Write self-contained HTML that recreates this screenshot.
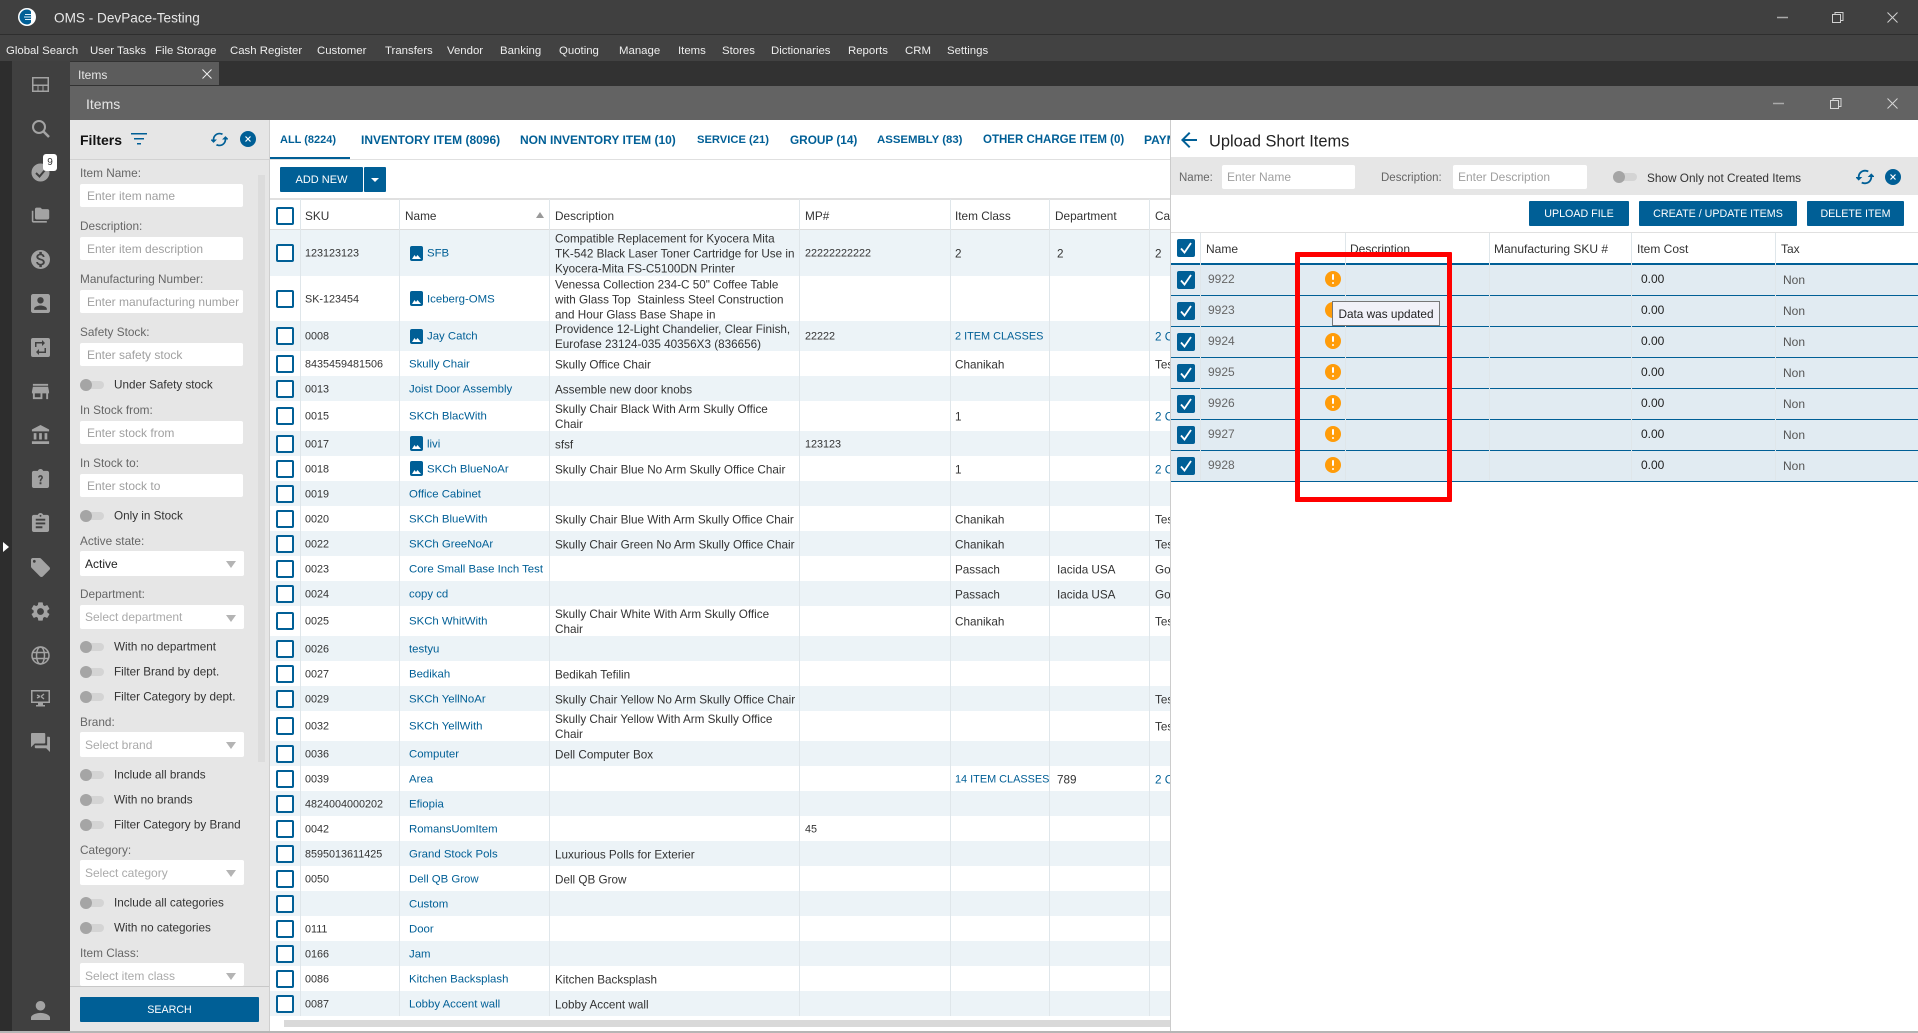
<!DOCTYPE html>
<html><head><meta charset="utf-8"><title>OMS</title>
<style>
html,body{margin:0;padding:0;width:1918px;height:1033px;overflow:hidden;background:#3f3f3f;font-family:"Liberation Sans",sans-serif;font-size:12px;color:#333}
.a{position:absolute}
.t{position:absolute;white-space:nowrap;transform:translateY(-50%)}
.menu span{position:absolute;top:51px;transform:translateY(-50%);color:#eee;font-size:11.4px;white-space:nowrap}
svg{display:block}
.ic{position:absolute;left:31px;width:19px;height:19px;fill:#a3a3a3}
.lbl{position:absolute;left:80px;color:#666;font-size:11.8px;transform:translateY(-50%);white-space:nowrap;margin-top:1px}
.inp{position:absolute;left:80px;width:163px;background:#fff;border-radius:2px;height:23px;line-height:25px;color:#a0a0a0;font-size:12px;text-indent:7px;white-space:nowrap;overflow:hidden}
.sel{position:absolute;left:80px;width:164px;background:#fff;border-radius:2px;height:25px;line-height:27px;color:#aaa;font-size:12px;text-indent:5px;white-space:nowrap}
.sel:after{content:"";position:absolute;right:8px;top:10px;border-left:5px solid transparent;border-right:5px solid transparent;border-top:7px solid #b4b4b4}
.tg{position:absolute;left:80px;width:24px;height:8px;border-radius:4px;background:#d4d4d4;transform:translateY(-50%)}
.tg:before{content:"";position:absolute;left:0;top:-2px;width:12px;height:12px;border-radius:50%;background:#a5a5a5}
.tl{position:absolute;left:114px;color:#333;font-size:11.7px;transform:translateY(-50%);white-space:nowrap}
.tab{position:absolute;top:140px;transform:translateY(-50%);color:#005f96;font-weight:bold;font-size:12px;white-space:nowrap}
.btn{position:absolute;background:#005f96;color:#fff;border-radius:1px;font-size:10.7px;text-align:center;white-space:nowrap}
#tb{position:absolute;left:270px;top:199px;width:900px;height:817px;overflow:hidden;font-size:11.7px}
.r{position:absolute;left:0;width:900px;display:block}
.s{background:#ecf3f7}
.r>div{position:absolute;top:calc(50% + 1px);transform:translateY(-50%);white-space:nowrap;line-height:15px}
.r .k{left:6px;top:50%;width:14px;height:14px;border:2px solid #005f96;border-radius:2px;background:#fff}
.r .sku{left:35px;font-size:10.8px}
.r .n{left:139px;color:#005f96;font-size:11.4px}
.r .n.i{left:157px}
.r .d{left:285px}
.r .m{left:535px;font-size:10.8px}
.r .c{left:685px}
.r .c.l{font-size:10.9px}
.r .e{left:787px}
.r .g{left:885px}
.l{color:#005f96}
.img{position:absolute;left:140px;width:13px;height:15px;background:#005f96;border-radius:2px}
.img svg{position:absolute;left:2px;top:8px}
.v{position:absolute;top:0;width:1px;height:817px;background:#dfe6ea}
.h{position:absolute;top:216px;transform:translateY(-50%);color:#333;white-space:nowrap;font-size:11.8px}
.ur{position:absolute;left:1171px;width:747px;height:30px;background:#e1ebf2;border-bottom:2px solid #005f96}
.ur .k{position:absolute;left:6px;top:6px;width:18px;height:18px;background:#005f96;border-radius:2px}
.ur .k svg{position:absolute;left:3px;top:2px}
.ur .a1{position:absolute;left:37px;top:calc(50% - 1px);transform:translateY(-50%);color:#666}
.ur .a2{position:absolute;left:470px;top:calc(50% - 1px);transform:translateY(-50%);color:#222}
.ur .a3{position:absolute;left:612px;top:50%;transform:translateY(-50%);color:#555}
.w{position:absolute;left:153.5px;top:7px;width:16px;height:16px;border-radius:50%;background:#ff9c0a}
.w:before{content:"";position:absolute;left:7px;top:3px;width:2px;height:6px;background:#fff;border-radius:1px}
.w:after{content:"";position:absolute;left:7px;top:11px;width:2px;height:2px;background:#fff;border-radius:1px}
.uh{position:absolute;top:249px;transform:translateY(-50%);white-space:nowrap;color:#333}
.uv{position:absolute;top:233px;width:1px;height:247px;background:#dfe6ea}
.rot{transform:rotate(90deg)}
</style></head><body>

<div class="a" style="left:0;top:0;width:1918px;height:34px;background:#404040"></div>
<div class="a" style="left:0;top:34px;width:1918px;height:1px;background:#2e2e2e"></div>
<div class="a" style="left:0;top:35px;width:1918px;height:26px;background:#424242"></div>
<svg class="a" style="left:18px;top:8px" width="18" height="18" viewBox="0 0 18 18"><circle cx="9" cy="9" r="9" fill="#fff"/><path d="M9 1.500A7.500 7.500 0 0 0 9 16.500Q11.500 16.500 13 14.500L13 3.500Q11.500 1.500 9 1.500Z" fill="#005f96"/><path d="M7 6.500h6M6 9h8M7 11.500h6" stroke="#d7ecf8" stroke-width="1.100"/></svg>
<div class="t" style="left:54px;top:18px;font-size:13.6px;color:#e8e8e8">OMS - DevPace-Testing</div>
<div class="menu">
<span style="left:6px">Global Search</span><span style="left:90px">User Tasks</span><span style="left:155px">File Storage</span><span style="left:230px">Cash Register</span><span style="left:317px">Customer</span><span style="left:385px">Transfers</span><span style="left:447px">Vendor</span><span style="left:500px">Banking</span><span style="left:559px">Quoting</span><span style="left:619px">Manage</span><span style="left:678px">Items</span><span style="left:722px">Stores</span><span style="left:771px">Dictionaries</span><span style="left:848px">Reports</span><span style="left:905px">CRM</span><span style="left:947px">Settings</span>
</div>
<svg class="a" style="left:1777px;top:12px" width="121" height="11" viewBox="0 0 121 11" fill="none" stroke="#d0d0d0" stroke-width="1"><path d="M0 5.500h11" stroke-width="1.500" stroke="#aaa"/><rect x="55.500" y="2.500" width="8" height="8"/><path d="M58 2.500V.5h8v8h-2.500"/><path d="M110.500.5l10 10M120.500.5l-10 10"/></svg>

<!-- sidebars -->
<div class="a" style="left:0;top:61px;width:12px;height:972px;background:#2d2d2d"></div>
<div class="a" style="left:12px;top:61px;width:58px;height:972px;background:#404040"></div>
<div class="a" style="left:3px;top:542px;border-left:6px solid #fff;border-top:5px solid transparent;border-bottom:5px solid transparent"></div>
<!-- tab strip -->
<div class="a" style="left:70px;top:61px;width:1848px;height:25px;background:#323232"></div>
<div class="a" style="left:70px;top:62px;width:149px;height:23px;background:#5c5c5c"></div>
<div class="t" style="left:78px;top:75px;color:#e6e6e6;font-size:12px">Items</div>
<svg class="a" style="left:202px;top:69px" width="10" height="10" viewBox="0 0 10 10"><path d="M.5.5l9 9M9.500.5l-9 9" stroke="#eee" fill="none"/></svg>
<div class="a" style="left:70px;top:86px;width:1848px;height:34px;background:#636363"></div>
<div class="t" style="left:86px;top:104px;color:#e6e6e6;font-size:14px">Items</div>
<svg class="a" style="left:1773px;top:98px" width="125" height="11" viewBox="0 0 125 11" fill="none" stroke="#d5d5d5" stroke-width="1"><path d="M0 5.500h11" stroke-width="1.500" stroke="#aaa"/><rect x="57.500" y="2.500" width="8" height="8"/><path d="M60 2.500V.5h8v8h-2.500"/><path d="M114.500.5l10 10M124.500.5l-10 10"/></svg>

<!-- sidebar icons -->
<svg class="ic" style="top:75px" viewBox="0 0 19 19"><path fill-rule="evenodd" d="M1 2h17v15H1zM2.500 3.500v6h14v-6zM2.500 11v4.500h4V11zM7.500 11v4.500h4V11zM12.500 11v4.500h4V11z"/></svg>
<svg class="ic" style="top:119px" viewBox="0 0 19 19"><circle cx="8" cy="8" r="6" fill="none" stroke="#a3a3a3" stroke-width="2"/><path d="M12.500 12.500L18 18" stroke="#a3a3a3" stroke-width="2.500"/></svg>
<svg class="ic" style="top:163px" viewBox="0 0 19 19"><circle cx="9.500" cy="9.500" r="9"/><path d="M5 10l3.500 3.500L14 7" fill="none" stroke="#404040" stroke-width="2"/></svg>
<div class="a" style="left:43px;top:154px;width:14px;height:17px;background:#fff;border-radius:3px;text-align:center;line-height:17px;font-size:10px;color:#333">9</div>
<svg class="ic" style="top:206px" viewBox="0 0 24 24"><path d="M3 6H1v13c0 1.100.9 2 2 2h17v-2H3V6zm18-2h-7l-2-2H7c-1.100 0-2 .9-2 2v11c0 1.100.9 2 2 2h14c1.100 0 2-.9 2-2V6c0-1.100-.9-2-2-2z"/></svg>
<svg class="ic" style="top:250px" viewBox="2 2 20 20"><path d="M12 2C6.480 2 2 6.480 2 12s4.480 10 10 10 10-4.480 10-10S17.520 2 12 2zm1.410 16.090V20h-2.670v-1.930c-1.710-.36-3.160-1.460-3.270-3.400h1.960c.1 1.050.82 1.870 2.650 1.870 1.960 0 2.400-.98 2.400-1.590 0-.83-.44-1.610-2.670-2.140-2.480-.6-4.180-1.620-4.180-3.670 0-1.720 1.390-2.840 3.110-3.210V4h2.670v1.950c1.860.45 2.790 1.860 2.850 3.390H14.300c-.05-1.110-.64-1.870-2.220-1.870-1.500 0-2.400.68-2.400 1.640 0 .84.65 1.390 2.670 1.910s4.180 1.390 4.180 3.910c-.01 1.830-1.380 2.830-3.120 3.160z"/></svg>
<svg class="ic" style="top:294px" viewBox="3 3 18 18"><path d="M19 3H5c-1.110 0-2 .9-2 2v14c0 1.100.89 2 2 2h14c1.100 0 2-.9 2-2V5c0-1.100-.9-2-2-2zm-7 3c1.650 0 3 1.350 3 3s-1.350 3-3 3-3-1.350-3-3 1.350-3 3-3zm6 12H6v-1c0-2 4-3.100 6-3.100s6 1.100 6 3.100v1z"/></svg>
<svg class="ic" style="top:338px" viewBox="0 0 19 19"><path fill-rule="evenodd" d="M2 0h15a2 2 0 0 1 2 2v15a2 2 0 0 1-2 2H2a2 2 0 0 1-2-2V2a2 2 0 0 1 2-2zM4 4v5h1.500V5.500H11V8l3-3-3-3v2zM15 15v-5h-1.500v3.500H8V11l-3 3 3 3v-2z"/></svg>
<svg class="ic" style="top:382px" viewBox="2 3 20 18"><path d="M20 4H4v2h16V4zm1 10v-2l-1-5H4l-1 5v2h1v6h10v-6h4v6h2v-6h1zm-9 4H6v-4h6v4z"/></svg>
<svg class="ic" style="top:425px" viewBox="2 1 19 21"><path d="M4 10v7h3v-7H4zm6 0v7h3v-7h-3zM2 22h19v-3H2v3zm14-12v7h3v-7h-3zm-4.500-9L2 6v2h19V6l-9.500-5z"/></svg>
<svg class="ic" style="top:469px" viewBox="3 1 18 20"><path fill-rule="evenodd" d="M19 3h-4.180C14.400 1.840 13.300 1 12 1c-1.300 0-2.400.84-2.820 2H5c-1.100 0-2 .9-2 2v14c0 1.100.9 2 2 2h14c1.100 0 2-.9 2-2V5c0-1.100-.9-2-2-2zM11 15h2v2h-2zM9.500 10c0-1.500 1.100-2.500 2.500-2.500s2.500 1 2.500 2.500c0 1.800-1.700 1.800-1.700 4h-1.600c0-2.800 1.700-2.700 1.700-4 0-.6-.4-1-.9-1s-.9.4-.9 1z"/></svg>
<svg class="ic" style="top:513px" viewBox="3 1 18 20"><path d="M19 3h-4.180C14.400 1.840 13.300 1 12 1c-1.300 0-2.400.84-2.820 2H5c-1.100 0-2 .9-2 2v14c0 1.100.9 2 2 2h14c1.100 0 2-.9 2-2V5c0-1.100-.9-2-2-2zm-7 0c.55 0 1 .45 1 1s-.45 1-1 1-1-.45-1-1 .45-1 1-1zm2 14H7v-2h7v2zm3-4H7v-2h10v2zm0-4H7V7h10v2z"/></svg>
<svg class="ic" style="top:558px" viewBox="2 2 20 20"><path d="M21.410 11.580l-9-9C12.050 2.220 11.550 2 11 2H4c-1.100 0-2 .9-2 2v7c0 .55.22 1.050.59 1.420l9 9c.36.36.86.58 1.410.58.55 0 1.050-.22 1.410-.59l7-7c.37-.36.59-.86.59-1.410 0-.55-.23-1.060-.59-1.420zM5.500 7C4.670 7 4 6.330 4 5.500S4.670 4 5.500 4 7 4.670 7 5.500 6.330 7 5.500 7z"/></svg>
<svg class="ic" style="top:602px" viewBox="2.500 2 19 20"><path d="M19.140 12.940c.04-.3.06-.61.06-.94 0-.32-.02-.64-.07-.94l2.030-1.580c.18-.14.23-.41.12-.61l-1.920-3.320c-.12-.22-.37-.29-.59-.22l-2.390.96c-.5-.38-1.030-.7-1.620-.94l-.36-2.540c-.04-.24-.24-.41-.48-.41h-3.840c-.24 0-.43.17-.47.41l-.36 2.540c-.59.24-1.130.57-1.620.94l-2.390-.96c-.22-.08-.47 0-.59.22L2.740 8.870c-.12.21-.08.47.12.61l2.030 1.580c-.05.3-.09.63-.09.94s.02.64.07.94l-2.030 1.580c-.18.14-.23.41-.12.61l1.920 3.320c.12.22.37.29.59.22l2.390-.96c.5.38 1.030.7 1.620.94l.36 2.540c.05.24.24.41.48.41h3.840c.24 0 .44-.17.47-.41l.36-2.540c.59-.24 1.130-.56 1.620-.94l2.390.96c.22.08.47 0 .59-.22l1.920-3.320c.12-.22.07-.47-.12-.61l-2.010-1.580zM12 15.600c-1.980 0-3.600-1.620-3.600-3.600s1.620-3.600 3.600-3.600 3.600 1.620 3.600 3.600-1.620 3.600-3.600 3.600z"/></svg>
<svg class="ic" style="top:646px" viewBox="0 0 19 19" fill="none"><g fill="none" stroke="#a3a3a3" stroke-width="1.500"><circle cx="9.500" cy="9.500" r="8.500"/><ellipse cx="9.500" cy="9.500" rx="4" ry="8.500"/><path d="M1.500 6.500h16M1.500 12.500h16"/></g></svg>
<svg class="ic" style="top:689px" viewBox="0 0 19 19"><path fill-rule="evenodd" d="M0 1h19v13h-7v2h2v1.500H5V16h2v-2H0zM1.500 2.500v10h16v-10z"/><path d="M6 9l3-1.500M6 6l3 1.500M13 5l-3 2.500M13 10l-3-2.500" stroke="#a3a3a3" stroke-width="1.300"/></svg>
<svg class="ic" style="top:733px" viewBox="2 2 20 20"><path d="M21 6h-2v9H6v2c0 .55.45 1 1 1h11l4 4V7c0-.55-.45-1-1-1zm-4 6V3c0-.55-.45-1-1-1H3c-.55 0-1 .45-1 1v14l4-4h10c.55 0 1-.45 1-1z"/></svg>
<svg class="ic" style="top:1001px" viewBox="4 4 16 16"><path d="M12 12c2.210 0 4-1.790 4-4s-1.790-4-4-4-4 1.790-4 4 1.790 4 4 4zm0 2c-2.670 0-8 1.340-8 4v2h16v-2c0-2.660-5.330-4-8-4z"/></svg>

<!-- filters panel -->
<div class="a" style="left:70px;top:120px;width:199px;height:911px;background:#e6e6e6;overflow:hidden"></div>
<div class="a" style="left:70px;top:159px;width:199px;height:1px;background:#d2d2d2"></div>
<div class="t" style="left:80px;top:140px;font-size:14px;font-weight:bold;color:#111">Filters</div>
<svg class="a" style="left:131px;top:133px" width="16" height="13" viewBox="0 0 16 13" fill="#005f96"><path d="M0 0h16v1.500H0zM3 5h10v1.500H3zM6 10h4v1.500H6z"/></svg>
<svg class="a rot" style="left:211px;top:131px" width="17" height="17" viewBox="3 2 18 20" fill="#005f96"><path d="M12 4V1L8 5l4 4V6c3.310 0 6 2.690 6 6 0 1.010-.25 1.970-.7 2.800l1.460 1.460C19.540 15.030 20 13.570 20 12c0-4.420-3.580-8-8-8zm0 14c-3.310 0-6-2.690-6-6 0-1.010.25-1.970.7-2.800L5.240 7.740C4.460 8.970 4 10.430 4 12c0 4.420 3.580 8 8 8v3l4-4-4-4v3z"/></svg>
<svg class="a" style="left:240px;top:131px" width="16" height="16" viewBox="0 0 16 16"><circle cx="8" cy="8" r="8" fill="#005f96"/><path d="M5.500 5.500l5 5M10.500 5.500l-5 5" stroke="#fff" stroke-width="1.200"/></svg>

<div class="lbl" style="top:172px">Item Name:</div><div class="inp" style="top:184px">Enter item name</div>
<div class="lbl" style="top:225px">Description:</div><div class="inp" style="top:237px">Enter item description</div>
<div class="lbl" style="top:278px">Manufacturing Number:</div><div class="inp" style="top:290px">Enter manufacturing number</div>
<div class="lbl" style="top:331px">Safety Stock:</div><div class="inp" style="top:343px">Enter safety stock</div>
<div class="tg" style="top:385px"></div><div class="tl" style="top:385px">Under Safety stock</div>
<div class="lbl" style="top:409px">In Stock from:</div><div class="inp" style="top:421px">Enter stock from</div>
<div class="lbl" style="top:462px">In Stock to:</div><div class="inp" style="top:474px">Enter stock to</div>
<div class="tg" style="top:516px"></div><div class="tl" style="top:516px">Only in Stock</div>
<div class="lbl" style="top:540px">Active state:</div><div class="sel" style="top:551px;color:#222">Active</div>
<div class="lbl" style="top:593px">Department:</div><div class="sel" style="top:605px;height:24px;line-height:25px">Select department</div>
<div class="tg" style="top:647px"></div><div class="tl" style="top:647px">With no department</div>
<div class="tg" style="top:672px"></div><div class="tl" style="top:672px">Filter Brand by dept.</div>
<div class="tg" style="top:697px"></div><div class="tl" style="top:697px">Filter Category by dept.</div>
<div class="lbl" style="top:721px">Brand:</div><div class="sel" style="top:732px">Select brand</div>
<div class="tg" style="top:775px"></div><div class="tl" style="top:775px">Include all brands</div>
<div class="tg" style="top:800px"></div><div class="tl" style="top:800px">With no brands</div>
<div class="tg" style="top:825px"></div><div class="tl" style="top:825px">Filter Category by Brand</div>
<div class="lbl" style="top:849px">Category:</div><div class="sel" style="top:860px">Select category</div>
<div class="tg" style="top:903px"></div><div class="tl" style="top:903px">Include all categories</div>
<div class="tg" style="top:928px"></div><div class="tl" style="top:928px">With no categories</div>
<div class="lbl" style="top:952px">Item Class:</div><div class="sel" style="top:963px;height:23px;overflow:hidden">Select item class</div>
<div class="a" style="left:258px;top:175px;width:7px;height:587px;background:#dcdcdc"></div>
<div class="a" style="left:70px;top:986px;width:199px;height:1px;background:#c8c8c8"></div>
<div class="btn" style="left:80px;top:997px;width:179px;height:25px;line-height:27px">SEARCH</div>

<!-- main white -->
<div class="a" style="left:269px;top:120px;width:1px;height:911px;background:#cfcfcf"></div>
<div class="a" style="left:270px;top:120px;width:1648px;height:911px;background:#fff"></div>
<div class="a" style="left:0;top:1031px;width:1918px;height:2px;background:#b5b5b5"></div>
<div class="a" style="left:270px;top:159px;width:900px;height:1px;background:#e0e0e0"></div>
<div class="a" style="left:270px;top:157px;width:80px;height:2px;background:#005f96"></div>
<div class="tab" style="left:280px;font-size:11px">ALL (8224)</div>
<div class="tab" style="left:361px">INVENTORY ITEM (8096)</div>
<div class="tab" style="left:520px">NON INVENTORY ITEM (10)</div>
<div class="tab" style="left:697px;font-size:11.2px">SERVICE (21)</div>
<div class="tab" style="left:790px;font-size:11.8px">GROUP (14)</div>
<div class="tab" style="left:877px;font-size:11.4px">ASSEMBLY (83)</div>
<div class="tab" style="left:983px;font-size:11.5px">OTHER CHARGE ITEM (0)</div>
<div class="tab" style="left:1144px">PAYMENT</div>
<div class="btn" style="left:280px;top:167px;width:83px;height:25px;line-height:26px;font-size:11px">ADD NEW</div>
<div class="btn" style="left:364px;top:167px;width:22px;height:25px"></div>
<div class="a" style="left:371px;top:178px;border-left:4px solid transparent;border-right:4px solid transparent;border-top:4px solid #fff"></div>

<div class="a" style="left:270px;top:198px;width:900px;height:2px;background:#e0e0e0"></div>
<div class="a" style="left:270px;top:229px;width:900px;height:2px;background:#dcdcdc"></div>
<div class="a" style="left:276px;top:207px;width:14px;height:14px;border:2px solid #005f96;border-radius:2px;background:#fff"></div>
<div class="h" style="left:305px">SKU</div>
<div class="h" style="left:405px">Name</div>
<div class="a" style="left:536px;top:212px;border-left:4px solid transparent;border-right:4px solid transparent;border-bottom:6px solid #999"></div>
<div class="h" style="left:555px">Description</div>
<div class="h" style="left:805px">MP#</div>
<div class="h" style="left:955px">Item Class</div>
<div class="h" style="left:1055px">Department</div>
<div class="h" style="left:1155px;width:15px;overflow:hidden">Category</div>

<div id="tb">
<div class="r s" style="top:31px;height:46px"><div class="k"></div><div class="sku">123123123</div><span class="img" style="top:16px"><svg width="9" height="5" viewBox="0 0 9 5"><path d="M0 5l2.500-4L4 3l1.500-2L9 5z" fill="#fff"/></svg></span><div class="n i">SFB</div><div class="d">Compatible Replacement for Kyocera Mita<br>TK-542 Black Laser Toner Cartridge for Use in<br>Kyocera-Mita FS-C5100DN Printer</div><div class="m">22222222222</div><div class="c">2</div><div class="e">2</div><div class="g">2</div></div>
<div class="r" style="top:77px;height:45px"><div class="k"></div><div class="sku">SK-123454</div><span class="img" style="top:15px"><svg width="9" height="5" viewBox="0 0 9 5"><path d="M0 5l2.500-4L4 3l1.500-2L9 5z" fill="#fff"/></svg></span><div class="n i">Iceberg-OMS</div><div class="d">Venessa Collection 234-C 50" Coffee Table<br>with Glass Top&nbsp; Stainless Steel Construction<br>and Hour Glass Base Shape in</div></div>
<div class="r s" style="top:122px;height:30px"><div class="k"></div><div class="sku">0008</div><span class="img" style="top:8px"><svg width="9" height="5" viewBox="0 0 9 5"><path d="M0 5l2.500-4L4 3l1.500-2L9 5z" fill="#fff"/></svg></span><div class="n i">Jay Catch</div><div class="d">Providence 12-Light Chandelier, Clear Finish,<br>Eurofase 23124-035 40356X3 (836656)</div><div class="m">22222</div><div class="c l">2 ITEM CLASSES</div><div class="g l">2 CATEGORIES</div></div>
<div class="r" style="top:152px;height:25px"><div class="k"></div><div class="sku">8435459481506</div><div class="n">Skully Chair</div><div class="d">Skully Office Chair</div><div class="c">Chanikah</div><div class="g">Test</div></div>
<div class="r s" style="top:177px;height:25px"><div class="k"></div><div class="sku">0013</div><div class="n">Joist Door Assembly</div><div class="d">Assemble new door knobs</div></div>
<div class="r" style="top:202px;height:30px"><div class="k"></div><div class="sku">0015</div><div class="n">SKCh BlacWith</div><div class="d">Skully Chair Black With Arm Skully Office<br>Chair</div><div class="c">1</div><div class="g l">2 CATEGORIES</div></div>
<div class="r s" style="top:232px;height:25px"><div class="k"></div><div class="sku">0017</div><span class="img" style="top:5px"><svg width="9" height="5" viewBox="0 0 9 5"><path d="M0 5l2.500-4L4 3l1.500-2L9 5z" fill="#fff"/></svg></span><div class="n i">livi</div><div class="d">sfsf</div><div class="m">123123</div></div>
<div class="r" style="top:257px;height:25px"><div class="k"></div><div class="sku">0018</div><span class="img" style="top:5px"><svg width="9" height="5" viewBox="0 0 9 5"><path d="M0 5l2.500-4L4 3l1.500-2L9 5z" fill="#fff"/></svg></span><div class="n i">SKCh BlueNoAr</div><div class="d">Skully Chair Blue No Arm Skully Office Chair</div><div class="c">1</div><div class="g l">2 CATEGORIES</div></div>
<div class="r s" style="top:282px;height:25px"><div class="k"></div><div class="sku">0019</div><div class="n">Office Cabinet</div></div>
<div class="r" style="top:307px;height:25px"><div class="k"></div><div class="sku">0020</div><div class="n">SKCh BlueWith</div><div class="d">Skully Chair Blue With Arm Skully Office Chair</div><div class="c">Chanikah</div><div class="g">Test</div></div>
<div class="r s" style="top:332px;height:25px"><div class="k"></div><div class="sku">0022</div><div class="n">SKCh GreeNoAr</div><div class="d">Skully Chair Green No Arm Skully Office Chair</div><div class="c">Chanikah</div><div class="g">Test</div></div>
<div class="r" style="top:357px;height:25px"><div class="k"></div><div class="sku">0023</div><div class="n">Core Small Base Inch Test</div><div class="c">Passach</div><div class="e">Iacida USA</div><div class="g">Goods</div></div>
<div class="r s" style="top:382px;height:25px"><div class="k"></div><div class="sku">0024</div><div class="n">copy cd</div><div class="c">Passach</div><div class="e">Iacida USA</div><div class="g">Goods</div></div>
<div class="r" style="top:407px;height:30px"><div class="k"></div><div class="sku">0025</div><div class="n">SKCh WhitWith</div><div class="d">Skully Chair White With Arm Skully Office<br>Chair</div><div class="c">Chanikah</div><div class="g">Test</div></div>
<div class="r s" style="top:437px;height:25px"><div class="k"></div><div class="sku">0026</div><div class="n">testyu</div></div>
<div class="r" style="top:462px;height:25px"><div class="k"></div><div class="sku">0027</div><div class="n">Bedikah</div><div class="d">Bedikah Tefilin</div></div>
<div class="r s" style="top:487px;height:25px"><div class="k"></div><div class="sku">0029</div><div class="n">SKCh YellNoAr</div><div class="d">Skully Chair Yellow No Arm Skully Office Chair</div><div class="g">Test</div></div>
<div class="r" style="top:512px;height:30px"><div class="k"></div><div class="sku">0032</div><div class="n">SKCh YellWith</div><div class="d">Skully Chair Yellow With Arm Skully Office<br>Chair</div><div class="g">Test</div></div>
<div class="r s" style="top:542px;height:25px"><div class="k"></div><div class="sku">0036</div><div class="n">Computer</div><div class="d">Dell Computer Box</div></div>
<div class="r" style="top:567px;height:25px"><div class="k"></div><div class="sku">0039</div><div class="n">Area</div><div class="c l">14 ITEM CLASSES</div><div class="e">789</div><div class="g l">2 CATEGORIES</div></div>
<div class="r s" style="top:592px;height:25px"><div class="k"></div><div class="sku">4824004000202</div><div class="n">Efiopia</div></div>
<div class="r" style="top:617px;height:25px"><div class="k"></div><div class="sku">0042</div><div class="n">RomansUomItem</div><div class="m">45</div></div>
<div class="r s" style="top:642px;height:25px"><div class="k"></div><div class="sku">8595013611425</div><div class="n">Grand Stock Pols</div><div class="d">Luxurious Polls for Exterier</div></div>
<div class="r" style="top:667px;height:25px"><div class="k"></div><div class="sku">0050</div><div class="n">Dell QB Grow</div><div class="d">Dell QB Grow</div></div>
<div class="r s" style="top:692px;height:25px"><div class="k"></div><div class="n">Custom</div></div>
<div class="r" style="top:717px;height:25px"><div class="k"></div><div class="sku">0111</div><div class="n">Door</div></div>
<div class="r s" style="top:742px;height:25px"><div class="k"></div><div class="sku">0166</div><div class="n">Jam</div></div>
<div class="r" style="top:767px;height:25px"><div class="k"></div><div class="sku">0086</div><div class="n">Kitchen Backsplash</div><div class="d">Kitchen Backsplash</div></div>
<div class="r s" style="top:792px;height:25px"><div class="k"></div><div class="sku">0087</div><div class="n">Lobby Accent wall</div><div class="d">Lobby Accent wall</div></div>
<div class="v" style="left:30px"></div><div class="v" style="left:129px"></div><div class="v" style="left:279px"></div><div class="v" style="left:529px"></div><div class="v" style="left:680px"></div><div class="v" style="left:779px"></div><div class="v" style="left:879px"></div>
</div>
<div class="a" style="left:284px;top:1020px;width:886px;height:7px;background:#d9d9d9"></div>

<!-- right panel -->
<div class="a" style="left:1170px;top:120px;width:748px;height:911px;background:#fff;border-left:1px solid #ccc"></div>
<svg class="a" style="left:1181px;top:132px" width="16" height="16" viewBox="4 4 16 16" fill="#005f96"><path d="M20 11H7.830l5.590-5.590L12 4l-8 8 8 8 1.410-1.410L7.830 13H20v-2z"/></svg>
<div class="t" style="left:1209px;top:142px;font-size:16.4px;color:#222">Upload Short Items</div>
<div class="a" style="left:1171px;top:157px;width:747px;height:38px;background:#e6e6e6"></div>
<div class="t" style="left:1179px;top:177.500px;color:#666;font-size:11.500px">Name:</div>
<div class="inp" style="left:1222px;top:165px;width:133px;height:24px;line-height:24px;text-indent:5px">Enter Name</div>
<div class="t" style="left:1381px;top:177.500px;color:#666;font-size:11.500px">Description:</div>
<div class="inp" style="left:1453px;top:165px;width:134px;height:24px;line-height:24px;text-indent:5px">Enter Description</div>
<div class="tg" style="left:1613px;top:177px"></div>
<div class="t" style="left:1647px;top:178px;font-size:11.8px;color:#333">Show Only not Created Items</div>
<svg class="a rot" style="left:1856px;top:168px" width="18" height="18" viewBox="3 2 18 20" fill="#005f96"><path d="M12 4V1L8 5l4 4V6c3.310 0 6 2.690 6 6 0 1.010-.25 1.970-.7 2.800l1.460 1.460C19.540 15.030 20 13.570 20 12c0-4.420-3.580-8-8-8zm0 14c-3.310 0-6-2.690-6-6 0-1.010.25-1.970.7-2.800L5.240 7.740C4.460 8.970 4 10.430 4 12c0 4.420 3.580 8 8 8v3l4-4-4-4v3z"/></svg>
<svg class="a" style="left:1885px;top:169px" width="16" height="16" viewBox="0 0 16 16"><circle cx="8" cy="8" r="8" fill="#005f96"/><path d="M5.500 5.500l5 5M10.500 5.500l-5 5" stroke="#fff" stroke-width="1.200"/></svg>
<div class="btn" style="left:1529px;top:201px;width:100px;height:25px;line-height:26px">UPLOAD FILE</div>
<div class="btn" style="left:1639px;top:201px;width:158px;height:25px;line-height:26px">CREATE / UPDATE ITEMS</div>
<div class="btn" style="left:1807px;top:201px;width:97px;height:25px;line-height:26px">DELETE ITEM</div>

<div class="a" style="left:1171px;top:232px;width:747px;height:1px;background:#e0e0e0"></div>
<div class="a" style="left:1171px;top:263px;width:747px;height:2px;background:#005f96"></div>
<div class="uh" style="left:1206px">Name</div><div class="uh" style="left:1350px">Description</div><div class="uh" style="left:1494px">Manufacturing SKU #</div><div class="uh" style="left:1637px">Item Cost</div><div class="uh" style="left:1781px">Tax</div>
<div class="a" style="left:1177px;top:239px;width:18px;height:18px;background:#005f96;border-radius:2px"><svg class="a" style="left:3px;top:2px" width="12" height="14" viewBox="0 0 12 14"><path d="M1 7.500l3.500 4L11 2" fill="none" stroke="#fff" stroke-width="1.800"/></svg></div>

<div class="ur" style="top:265px"><div class="k"><svg width="12" height="14" viewBox="0 0 12 14"><path d="M1 7.500l3.500 4L11 2" fill="none" stroke="#fff" stroke-width="1.800"/></svg></div><span class="a1">9922</span><div class="w" style="left:153.500px;top:6px"></div><span class="a2">0.00</span><span class="a3">Non</span></div>
<div class="ur" style="top:296px"><div class="k"><svg width="12" height="14" viewBox="0 0 12 14"><path d="M1 7.500l3.500 4L11 2" fill="none" stroke="#fff" stroke-width="1.800"/></svg></div><span class="a1">9923</span><div class="w" style="left:153.500px;top:6px"></div><span class="a2">0.00</span><span class="a3">Non</span></div>
<div class="ur" style="top:327px"><div class="k"><svg width="12" height="14" viewBox="0 0 12 14"><path d="M1 7.500l3.500 4L11 2" fill="none" stroke="#fff" stroke-width="1.800"/></svg></div><span class="a1">9924</span><div class="w" style="left:153.500px;top:6px"></div><span class="a2">0.00</span><span class="a3">Non</span></div>
<div class="ur" style="top:358px"><div class="k"><svg width="12" height="14" viewBox="0 0 12 14"><path d="M1 7.500l3.500 4L11 2" fill="none" stroke="#fff" stroke-width="1.800"/></svg></div><span class="a1">9925</span><div class="w" style="left:153.500px;top:6px"></div><span class="a2">0.00</span><span class="a3">Non</span></div>
<div class="ur" style="top:389px"><div class="k"><svg width="12" height="14" viewBox="0 0 12 14"><path d="M1 7.500l3.500 4L11 2" fill="none" stroke="#fff" stroke-width="1.800"/></svg></div><span class="a1">9926</span><div class="w" style="left:153.500px;top:6px"></div><span class="a2">0.00</span><span class="a3">Non</span></div>
<div class="ur" style="top:420px"><div class="k"><svg width="12" height="14" viewBox="0 0 12 14"><path d="M1 7.500l3.500 4L11 2" fill="none" stroke="#fff" stroke-width="1.800"/></svg></div><span class="a1">9927</span><div class="w" style="left:153.500px;top:6px"></div><span class="a2">0.00</span><span class="a3">Non</span></div>
<div class="ur" style="top:451px;border-bottom-width:1px"><div class="k"><svg width="12" height="14" viewBox="0 0 12 14"><path d="M1 7.500l3.500 4L11 2" fill="none" stroke="#fff" stroke-width="1.800"/></svg></div><span class="a1">9928</span><div class="w" style="left:153.500px;top:6px"></div><span class="a2">0.00</span><span class="a3">Non</span></div>
<div class="uv" style="left:1200px"></div><div class="uv" style="left:1345px"></div><div class="uv" style="left:1489px"></div><div class="uv" style="left:1631px"></div><div class="uv" style="left:1775px"></div>

<div class="a" style="left:1332px;top:301px;width:106px;height:23px;line-height:25px;background:#f1f1f8;border:1px solid #777;text-align:center;font-size:11.800px;color:#222;white-space:nowrap">Data was updated</div>
<div class="a" style="left:1295px;top:252px;width:147px;height:240px;border:5px solid #f00;border-radius:1px"></div>
</body></html>
